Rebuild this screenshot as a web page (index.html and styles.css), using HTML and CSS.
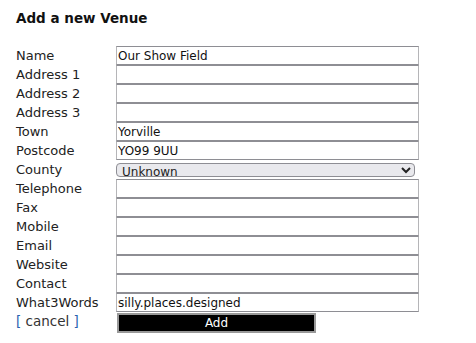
FILE: index.html
```html
<!doctype html>
<html lang="en">
<head>
    <meta charset="UTF-8">
    <title>Add a new Venue</title>
    <link rel="stylesheet" href="styles.css">
</head>
<body>
<h3 class="title">Add a new Venue</h3>

<form class="venue-form">
    <label>Name</label>
    <input type="text" value="Our Show Field">
    <label>Address 1</label>
    <input type="text">
    <label>Address 2</label>
    <input type="text">
    <label>Address 3</label>
    <input type="text">
    <label>Town</label>
    <input type="text" value="Yorville">
    <label>Postcode</label>
    <input type="text" value="YO99 9UU">
    <label>County</label>
    <div class="select-cell">
        <select>
            <option>Unknown</option>
        </select>
    </div>
    <label>Telephone</label>
    <input type="text">
    <label>Fax</label>
    <input type="text">
    <label>Mobile</label>
    <input type="text">
    <label>Email</label>
    <input type="text">
    <label>Website</label>
    <input type="text">
    <label>Contact</label>
    <input type="text">
    <label>What3Words</label>
    <input type="text" value="silly.places.designed">
    <span class="cancel"><span class="bracket">[</span> cancel <span class="bracket">]</span></span>
    <div class="button-cell">
        <button type="button" class="add-btn">Add</button>
    </div>
</form>
</body>
</html>
```

FILE: styles.css
```css
body{
    margin: 0;
    padding: 10px 16px;
    background: #fff;
    color: #222;
    font-family: "DejaVu Sans", sans-serif;
}
.title{
    margin: 0 0 20px 0;
    font-size: 13.5px;
    font-weight: bold;
    color: #111;
    line-height: 16px;
}
.venue-form{
    display: grid;
    grid-template-columns: 100px 303px;
    grid-auto-rows: 19px;
    align-items: start;
}
.venue-form label{
    font-size: 13px;
    line-height: 19px;
    color: #222;
}
.venue-form input{
    box-sizing: border-box;
    width: 303px;
    height: 19px;
    margin: 0;
    padding: 0 1px;
    border: 1px solid #8e8e94;
    border-left-color: #b5b5b8;
    border-right-color: #b5b5b8;
    font-family: "DejaVu Sans", sans-serif;
    font-size: 12px;
    color: #111;
    background: #fff;
}
.select-cell{
    padding-top: 1px;
}
.select-cell select{
    box-sizing: border-box;
    width: 299px;
    height: 14px;
    margin: 0;
    padding: 0 0 0 1px;
    border: 1px solid #8e8e94;
    border-radius: 4px;
    background: #e9e9ed;
    font-family: "DejaVu Sans", sans-serif;
    font-size: 12px;
    line-height: 12px;
    color: #222;
}
.cancel{
    font-size: 13.5px;
    line-height: 19px;
    color: #333;
}
.bracket{
    color: #2a62b0;
}
.add-btn{
    box-sizing: border-box;
    width: 199px;
    height: 20px;
    margin: 0 0 0 1px;
    padding: 0;
    border: 2px solid #999;
    background: #000;
    color: #fff;
    font-family: "DejaVu Sans", sans-serif;
    font-size: 12px;
}
```
